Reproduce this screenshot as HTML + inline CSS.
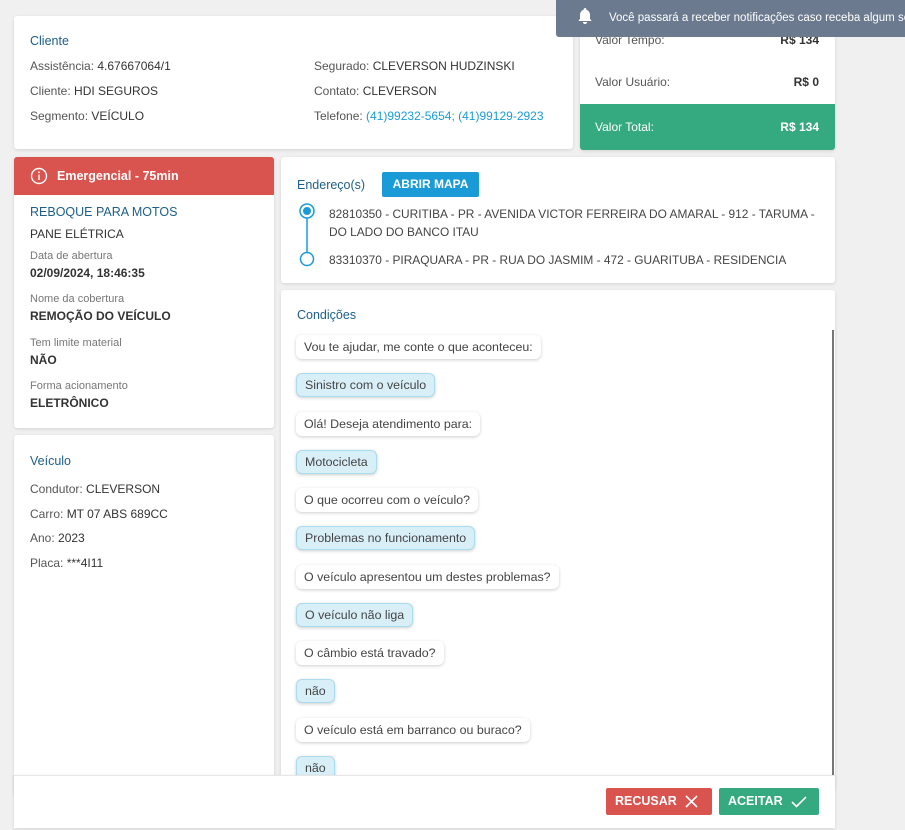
<!DOCTYPE html>
<html><head><meta charset="utf-8"><style>
*{box-sizing:border-box;margin:0;padding:0}
body{width:905px;height:830px;background:#f0f0f0;font-family:"Liberation Sans",sans-serif;font-size:12px;color:#555;position:relative;overflow:hidden}
.card{position:absolute;background:#fff;border-radius:3px;box-shadow:0 1px 3px rgba(0,0,0,.12)}
.abs{position:absolute;white-space:nowrap}
.t{color:#1d5f8a;font-size:12.5px}
.v{color:#333}
.lbl{font-size:11px;color:#777}
.b{font-weight:bold;color:#333}
.bub{position:absolute;left:15px;height:24px;line-height:24px;padding:0 8px;border-radius:6px;background:#fff;box-shadow:0 1px 3px rgba(0,0,0,.2);color:#444;white-space:nowrap;font-size:12.4px}
.bub.s{background:#d9eff8;border:1px solid #a9dcef;line-height:22px}
</style></head><body>

<div class="card" style="left:14px;top:16px;width:559px;height:133px">
 <div class="abs t" style="left:16px;top:18px">Cliente</div>
 <div class="abs" style="left:16px;top:43px">Assistência: <span class="v">4.67667064/1</span></div>
 <div class="abs" style="left:16px;top:68px">Cliente: <span class="v">HDI SEGUROS</span></div>
 <div class="abs" style="left:16px;top:93px">Segmento: <span class="v">VEÍCULO</span></div>
 <div class="abs" style="left:300px;top:43px">Segurado: <span class="v">CLEVERSON HUDZINSKI</span></div>
 <div class="abs" style="left:300px;top:68px">Contato: <span class="v">CLEVERSON</span></div>
 <div class="abs" style="left:300px;top:93px">Telefone: <span style="color:#1a9bd7">(41)99232-5654; (41)99129-2923</span></div>
</div>

<div class="card" style="left:580px;top:16px;width:255px;height:134px;overflow:hidden">
 <div class="abs" style="left:15px;top:17px">Valor Tempo:</div>
 <div class="abs b" style="right:16px;top:17px">R$ 134</div>
 <div class="abs" style="left:15px;top:59px">Valor Usuário:</div>
 <div class="abs b" style="right:16px;top:59px">R$ 0</div>
 <div style="position:absolute;left:0;top:88px;width:255px;height:46px;background:#35a97f"></div>
 <div class="abs" style="left:15px;top:104px;color:#fff">Valor Total:</div>
 <div class="abs" style="right:16px;top:104px;color:#fff;font-weight:bold">R$ 134</div>
</div>

<div style="position:absolute;left:556px;top:0;width:349px;height:37px;background:#6b7a8e;border-radius:0 0 0 3px;color:#fff;font-size:11.5px">
 <svg style="position:absolute;left:21px;top:7px" width="16" height="18" viewBox="0 0 16 18"><path d="M8 1a1.3 1.3 0 0 1 1.3 1.3v.5A5 5 0 0 1 13 7.6v4.2l1.6 2.2H1.4L3 11.8V7.6a5 5 0 0 1 3.7-4.8v-.5A1.3 1.3 0 0 1 8 1z M6 15h4a2 2 0 0 1-4 0z" fill="#fff"/></svg>
 <div class="abs" style="left:53px;top:12px">Você passará a receber notificações caso receba algum ser</div>
</div>

<div class="card" style="left:14px;top:157px;width:260px;height:271px;overflow:hidden">
 <div style="position:absolute;left:0;top:0;width:260px;height:38px;background:#d9534f"></div>
 <svg style="position:absolute;left:16px;top:10px" width="18" height="18" viewBox="0 0 18 18"><circle cx="9" cy="9" r="7.5" fill="none" stroke="#fff" stroke-width="1.4"/><rect x="8.3" y="7.5" width="1.4" height="5.5" fill="#fff"/><circle cx="9" cy="5.3" r=".9" fill="#fff"/></svg>
 <div class="abs" style="left:43px;top:12px;color:#fff;font-weight:bold;font-size:12.5px">Emergencial - 75min</div>
 <div class="abs t" style="left:16px;top:48px">REBOQUE PARA MOTOS</div>
 <div class="abs v" style="left:16px;top:70px">PANE ELÉTRICA</div>
 <div class="abs lbl" style="left:16px;top:93px">Data de abertura</div>
 <div class="abs b" style="left:16px;top:109px">02/09/2024, 18:46:35</div>
 <div class="abs lbl" style="left:16px;top:136px">Nome da cobertura</div>
 <div class="abs b" style="left:16px;top:152px">REMOÇÃO DO VEÍCULO</div>
 <div class="abs lbl" style="left:16px;top:180px">Tem limite material</div>
 <div class="abs b" style="left:16px;top:196px">NÃO</div>
 <div class="abs lbl" style="left:16px;top:223px">Forma acionamento</div>
 <div class="abs b" style="left:16px;top:239px">ELETRÔNICO</div>
</div>

<div class="card" style="left:14px;top:435px;width:260px;height:360px">
 <div class="abs t" style="left:16px;top:19px">Veículo</div>
 <div class="abs" style="left:16px;top:47px">Condutor: <span class="v">CLEVERSON</span></div>
 <div class="abs" style="left:16px;top:72px">Carro: <span class="v">MT 07 ABS 689CC</span></div>
 <div class="abs" style="left:16px;top:96px">Ano: <span class="v">2023</span></div>
 <div class="abs" style="left:16px;top:121px">Placa: <span class="v">***4I11</span></div>
</div>

<div class="card" style="left:281px;top:157px;width:554px;height:126px">
 <div class="abs t" style="left:16px;top:21px">Endereço(s)</div>
 <div class="abs" style="left:101px;top:15px;width:97px;height:25px;background:#1a9bd7;border-radius:2px;color:#fff;font-weight:bold;text-align:center;line-height:25px">ABRIR MAPA</div>
 <svg style="position:absolute;left:16px;top:45px" width="20" height="65" viewBox="0 0 20 65"><line x1="10" y1="10" x2="10" y2="57" stroke="#1a9bd7" stroke-width="1.5"/><circle cx="10" cy="9" r="7" fill="#fff" stroke="#1a9bd7" stroke-width="1.5"/><circle cx="10" cy="9" r="4" fill="#1a9bd7"/><circle cx="10" cy="57" r="6.5" fill="#fff" stroke="#1a9bd7" stroke-width="1.5"/></svg>
 <div class="abs v" style="left:48px;top:48px;line-height:18px;color:#444;font-size:11.9px">82810350 - CURITIBA - PR - AVENIDA VICTOR FERREIRA DO AMARAL - 912 - TARUMA -<br>DO LADO DO BANCO ITAU</div>
 <div class="abs v" style="left:48px;top:96px;color:#444;font-size:11.9px">83310370 - PIRAQUARA - PR - RUA DO JASMIM - 472 - GUARITUBA - RESIDENCIA</div>
</div>

<div class="card" style="left:281px;top:290px;width:554px;height:500px;overflow:hidden">
 <div class="abs t" style="left:16px;top:18px">Condições</div>
 <div style="position:absolute;left:551px;top:40px;width:2px;height:445px;background:#777"></div>
 <div class="bub" style="top:45px">Vou te ajudar, me conte o que aconteceu:</div>
 <div class="bub s" style="top:83px">Sinistro com o veículo</div>
 <div class="bub" style="top:122px">Olá! Deseja atendimento para:</div>
 <div class="bub s" style="top:160px">Motocicleta</div>
 <div class="bub" style="top:198px">O que ocorreu com o veículo?</div>
 <div class="bub s" style="top:236px">Problemas no funcionamento</div>
 <div class="bub" style="top:275px">O veículo apresentou um destes problemas?</div>
 <div class="bub s" style="top:313px">O veículo não liga</div>
 <div class="bub" style="top:351px">O câmbio está travado?</div>
 <div class="bub s" style="top:389px">não</div>
 <div class="bub" style="top:428px">O veículo está em barranco ou buraco?</div>
 <div class="bub s" style="top:466px">não</div>
</div>

<div style="position:absolute;left:14px;top:775px;width:821px;height:53px;background:#fff;border-top:1px solid #e6e6e6;box-shadow:0 1px 3px rgba(0,0,0,.12)">
 <div class="abs" style="left:592px;top:12px;width:106px;height:27px;background:#d9534f;border-radius:2px;color:#fff;font-weight:bold;font-size:12.5px;line-height:27px;padding-left:9px">RECUSAR
  <svg style="position:absolute;left:79px;top:7px" width="13" height="13" viewBox="0 0 13 13"><path d="M1 1L12 12M12 1L1 12" stroke="#fff" stroke-width="1.6"/></svg></div>
 <div class="abs" style="left:705px;top:12px;width:100px;height:27px;background:#35a97f;border-radius:2px;color:#fff;font-weight:bold;font-size:12.5px;line-height:27px;padding-left:9px">ACEITAR
  <svg style="position:absolute;left:72px;top:8px" width="16" height="12" viewBox="0 0 16 12"><path d="M1 6L5.5 10.5L15 1" fill="none" stroke="#fff" stroke-width="1.6"/></svg></div>
</div>
</body></html>
